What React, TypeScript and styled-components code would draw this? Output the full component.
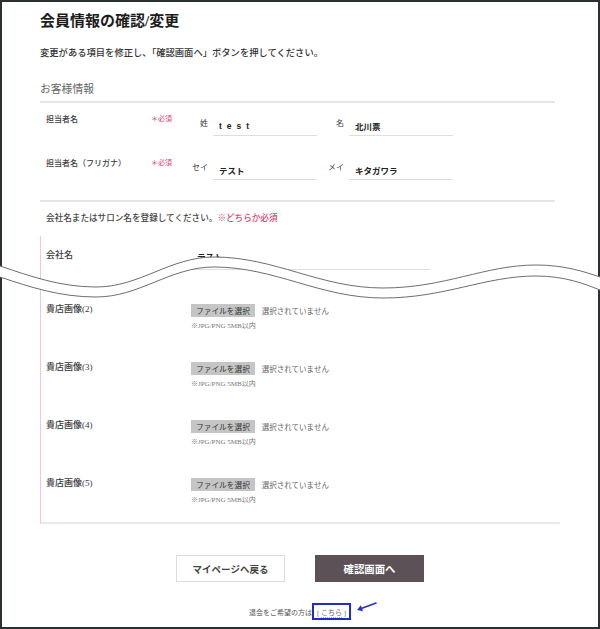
import React from "react";
import styled, { createGlobalStyle } from "styled-components";

const serif = `"Liberation Serif", "Noto Sans CJK JP", serif`;
const sans = `"Liberation Sans", "Noto Sans CJK JP", sans-serif`;

const GlobalStyle = createGlobalStyle`
  html, body { margin: 0; padding: 0; background: #ffffff; }
  body { font-family: ${serif}; color: #333; }
  *, *::before, *::after { box-sizing: border-box; }
`;

const Frame = styled.main`
  position: relative;
  width: 600px;
  height: 629px;
  border: 2px solid #2b3031;
  background: #fff;
  padding: 9px 38px 0 38px;
`;

const Title = styled.h1`
  margin: 0;
  font-size: 15px;
  line-height: 20px;
  font-weight: 700;
  color: #1c1c1c;
`;

const Lead = styled.p`
  margin: 15px 0 0;
  font-size: 9.3px;
  line-height: 14px;
  font-weight: 500;
  color: #333;
`;

const SectionHead = styled.h2`
  margin: 21px 5px 0 0;
  padding-bottom: 4px;
  border-bottom: 2px solid #e6e6e6;
  font-size: 10.8px;
  line-height: 16px;
  font-weight: 400;
  color: #666;
`;

const PersonBlock = styled.div`
  margin-right: 5px;
  padding: 9px 0 20px 6px;
  border-bottom: 2px solid #e6e6e6;
  display: flex;
  flex-direction: column;
  gap: 20px;
`;

const Row = styled.div`
  display: flex;
  align-items: flex-start;
`;

const RowLabel = styled.div`
  width: 105px;
  font-size: 8px;
  line-height: 16px;
  font-weight: 500;
  color: #3b3b3b;
  white-space: nowrap;
`;

const Required = styled.div`
  width: 35px;
  font-size: 7px;
  line-height: 15px;
  color: #d9436d;
  white-space: nowrap;
`;

const Field = styled.label`
  display: flex;
  align-items: flex-start;
  & + & {
    margin-left: 5px;
  }
`;

const Prefix = styled.span`
  width: 22px;
  margin-right: 5px;
  text-align: right;
  font-size: 8px;
  line-height: 24px;
  color: #444;
  white-space: nowrap;
`;

const TextInput = styled.input<{ $spaced?: boolean; $wide?: boolean }>`
  width: ${(p) => (p.$wide ? "239px" : "104px")};
  height: ${(p) => (p.$wide ? "22.5px" : "23.5px")};
  margin: 0;
  padding: ${(p) => (p.$wide ? "3px 4px 7px 6px" : "8px 4px 2px 6px")};
  border: none;
  border-bottom: 1.5px solid #dedede;
  border-radius: 0;
  background: transparent;
  outline: none;
  font-family: ${sans};
  font-size: 8.5px;
  font-weight: 700;
  color: #222;
  letter-spacing: ${(p) => (p.$spaced ? "5px" : "0")};
`;

const Notice = styled.p`
  margin: 9px 0 0;
  padding-left: 6px;
  font-size: 8.6px;
  line-height: 14px;
  font-weight: 500;
  color: #444;
`;

const Pink = styled.span`
  color: #d4466f;
`;

const CompanyBox = styled.section`
  margin-top: 11px;
  border-left: 1px solid #f5c4cd;
  border-bottom: 2px solid #ece6e7;
  padding: 11px 0 17px 5px;
`;

const BoxLabel = styled.div`
  width: 145px;
  font-size: 9px;
  line-height: 16px;
  font-weight: 500;
  color: #3a3a3a;
  white-space: nowrap;
`;

const FileList = styled.div`
  margin-top: 31.5px;
  display: flex;
  flex-direction: column;
  gap: 28px;
`;

const FileField = styled.div`
  display: flex;
  flex-direction: column;
`;

const FilePicker = styled.div`
  display: flex;
  align-items: center;
  height: 13px;
  margin-top: 3px;
`;

const FileButton = styled.button`
  height: 13px;
  margin: 0;
  padding: 0 5px;
  border: none;
  border-radius: 0;
  background: #c5c5c5;
  color: #333;
  font-family: "Noto Sans CJK JP", sans-serif;
  font-size: 7.7px;
  line-height: 13px;
`;

const FileStatus = styled.span`
  margin-left: 7px;
  font-family: "Noto Sans CJK JP", sans-serif;
  font-size: 7.5px;
  color: #666;
`;

const FileNote = styled.div`
  margin-top: 4px;
  font-size: 7px;
  line-height: 10px;
  color: #777;
`;

const Actions = styled.div`
  margin-top: 31px;
  display: flex;
  justify-content: center;
  gap: 30px;
`;

const ActionButton = styled.button<{ $primary?: boolean }>`
  width: 109px;
  height: 27px;
  margin: 0;
  padding: 0;
  border: 1px solid ${(p) => (p.$primary ? "#5b5157" : "#dcdcdc")};
  background: ${(p) => (p.$primary ? "#5b5157" : "#fff")};
  color: ${(p) => (p.$primary ? "#fff" : "#444")};
  font-family: ${serif};
  font-size: ${(p) => (p.$primary ? "10.4px" : "9.5px")};
  font-weight: 700;
`;

const Footer = styled.div`
  margin-top: 21px;
  height: 17px;
  display: flex;
  justify-content: center;
  align-items: center;
  font-size: 7px;
  color: #555;
`;

const LinkBox = styled.span`
  position: relative;
  display: inline-flex;
  align-items: center;
  height: 17px;
  padding: 0 3px;
  border: 2px solid #1f2cc6;
`;

const Link = styled.a`
  color: #666;
  text-decoration: none;
  white-space: pre;
`;

const Dotted = styled.span`
  text-decoration: underline dotted #aaa;
  text-underline-offset: 2px;
`;

const Arrow = styled.svg`
  position: absolute;
  left: calc(100% + 6px);
  top: -4px;
  width: 24px;
  height: 12px;
  overflow: visible;
`;

const CutMark = styled.svg`
  position: absolute;
  left: -2px;
  top: 243px;
  width: 600px;
  height: 60px;
  display: block;
  pointer-events: none;
`;

const upper =
  "M0,266 C30,276 60,287 96,287 C140,287 170,257 214,257 C275,257 320,288 383,288 C445,288 485,265 536,265 C565,265 585,272 600,277";
const lower =
  "M0,277 C30,287 60,297 96,297 C140,297 170,267 214,267 C275,267 320,298 383,298 C445,298 485,276 536,276 C565,276 585,284 600,290";
const band =
  upper +
  " L600,290 C585,284 565,276 536,276 C485,276 445,298 383,298 C320,298 275,267 214,267 C170,267 140,297 96,297 C60,297 30,287 0,277 Z";

const images = [2, 3, 4, 5];

export default function App() {
  return (
    <>
      <GlobalStyle />
      <Frame>
        <Title>会員情報の確認/変更</Title>
        <Lead>変更がある項目を修正し、「確認画面へ」ボタンを押してください。</Lead>
        <SectionHead>お客様情報</SectionHead>
        <PersonBlock>
          <Row>
            <RowLabel>担当者名</RowLabel>
            <Required>＊必須</Required>
            <Field>
              <Prefix>姓</Prefix>
              <TextInput readOnly defaultValue="test" $spaced />
            </Field>
            <Field>
              <Prefix>名</Prefix>
              <TextInput readOnly defaultValue="北川票" />
            </Field>
          </Row>
          <Row>
            <RowLabel>担当者名（フリガナ）</RowLabel>
            <Required>＊必須</Required>
            <Field>
              <Prefix>セイ</Prefix>
              <TextInput readOnly defaultValue="テスト" />
            </Field>
            <Field>
              <Prefix>メイ</Prefix>
              <TextInput readOnly defaultValue="キタガワラ" />
            </Field>
          </Row>
        </PersonBlock>
        <Notice>
          会社名またはサロン名を登録してください。<Pink>※どちらか必須</Pink>
        </Notice>
        <CompanyBox>
          <Row>
            <BoxLabel>会社名</BoxLabel>
            <TextInput readOnly defaultValue="テスト" $wide />
          </Row>
          <FileList>
            {images.map((n) => (
              <Row key={n}>
                <BoxLabel>貴店画像({n})</BoxLabel>
                <FileField>
                  <FilePicker>
                    <FileButton type="button">ファイルを選択</FileButton>
                    <FileStatus>選択されていません</FileStatus>
                  </FilePicker>
                  <FileNote>※JPG/PNG 5MB以内</FileNote>
                </FileField>
              </Row>
            ))}
          </FileList>
        </CompanyBox>
        <Actions>
          <ActionButton type="button">マイページへ戻る</ActionButton>
          <ActionButton type="button" $primary>
            確認画面へ
          </ActionButton>
        </Actions>
        <Footer>
          退会をご希望の方は
          <LinkBox>
            <Link href="#">
              {"[ "}
              <Dotted>こちら</Dotted>
              {" ]"}
            </Link>
            <Arrow viewBox="0 0 24 12">
              <line x1="21" y1="2" x2="5" y2="8" stroke="#2530c8" strokeWidth="1.6" strokeLinecap="round" />
              <polygon points="2,9 8,10.2 5.8,4.2" fill="#2530c8" />
            </Arrow>
          </LinkBox>
        </Footer>
        <CutMark viewBox="0 245 600 60" preserveAspectRatio="none">
          <path d={band} fill="#ffffff" />
          <path d={upper} fill="none" stroke="#6e6e6e" strokeWidth="1" />
          <path d={lower} fill="none" stroke="#6e6e6e" strokeWidth="1" />
        </CutMark>
      </Frame>
    </>
  );
}
